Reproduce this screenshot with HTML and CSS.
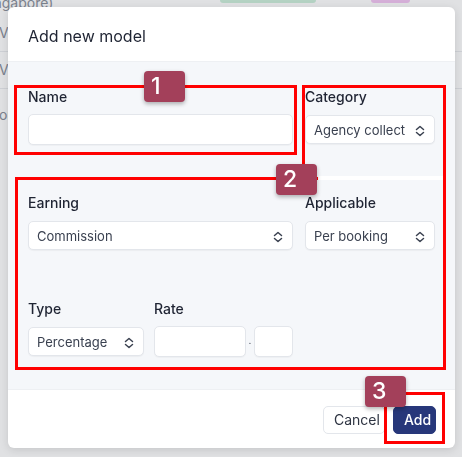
FILE: index.html
```html
<!DOCTYPE html>
<html lang="en">
<head>
    <meta charset="UTF-8">
    <meta name="viewport" content="width=device-width, initial-scale=1.0">
    <title>Add new model</title>
    <link rel="stylesheet" href="styles.css">
</head>
<body>
    <!-- page behind the dialog -->
    <div class="page">
        <div class="tags">
            <span class="tag tag-green"></span>
            <span class="tag tag-pink"></span>
        </div>
        <div class="row row-first">
            <span class="cell cell-city">(Singapore)</span>
            <span class="cell cell-vip">VIP</span>
        </div>
        <div class="row"><span class="cell">VIP</span></div>
        <div class="row row-last"><span class="cell cell-tour">Tour</span></div>
    </div>

    <div class="overlay">
        <div class="modal">
            <div class="modal-header">Add new model</div>

            <div class="modal-body">
                <div class="form-grid">
                    <div class="field">
                        <label>Name</label>
                        <div class="control">
                            <input class="input" type="text">
                        </div>
                    </div>
                    <div class="field">
                        <label>Category</label>
                        <div class="control">
                            <div class="select">Agency collect
                                <svg class="chevron" width="10" height="12" viewBox="0 0 10 12"><path d="M1.5 4.5 5 1.5 8.5 4.5M1.5 7.5 5 10.5 8.5 7.5"/></svg>
                            </div>
                        </div>
                    </div>

                    <div class="field">
                        <label>Earning</label>
                        <div class="control">
                            <div class="select">Commission
                                <svg class="chevron" width="10" height="12" viewBox="0 0 10 12"><path d="M1.5 4.5 5 1.5 8.5 4.5M1.5 7.5 5 10.5 8.5 7.5"/></svg>
                            </div>
                        </div>
                    </div>
                    <div class="field">
                        <label>Applicable</label>
                        <div class="control">
                            <div class="select">Per booking
                                <svg class="chevron" width="10" height="12" viewBox="0 0 10 12"><path d="M1.5 4.5 5 1.5 8.5 4.5M1.5 7.5 5 10.5 8.5 7.5"/></svg>
                            </div>
                        </div>
                    </div>

                    <div class="rate-row">
                        <div class="field field-type">
                            <label>Type</label>
                            <div class="control">
                                <div class="select">Percentage
                                    <svg class="chevron" width="10" height="12" viewBox="0 0 10 12"><path d="M1.5 4.5 5 1.5 8.5 4.5M1.5 7.5 5 10.5 8.5 7.5"/></svg>
                                </div>
                            </div>
                        </div>
                        <div class="field">
                            <label>Rate</label>
                            <div class="control">
                                <input class="input input-whole" type="text">
                                <span class="dot">.</span>
                                <input class="input input-decimal" type="text">
                            </div>
                        </div>
                    </div>
                </div>
            </div>

            <div class="modal-footer">
                <button class="btn btn-cancel">Cancel</button>
                <button class="btn btn-add">Add</button>
            </div>
        </div>
    </div>

    <!-- annotation marks -->
    <div class="marks">
        <div class="box box-name"></div>
        <div class="box box-category"></div>
        <div class="box box-earning"></div>
        <div class="box-gap"></div>
        <div class="box box-add"></div>
        <div class="badge badge-1">1</div>
        <div class="badge badge-2">2</div>
        <div class="badge badge-3">3</div>
    </div>
</body>
</html>
```

FILE: styles.css
```css
body {
    margin: 0;
    font-family: Inter, "Noto Sans", sans-serif;
    background: #fff;
    color: #1f2433;
    overflow: hidden;
}

/* Page behind the dialog */
.page {
    color: #8b919c;
    font-size: 14px;
}

.tags {
    display: flex;
    height: 3px;
    padding-left: 220px;
    gap: 55px;
}

.tag {
    display: block;
    height: 3px;
    border-radius: 0 0 5px 5px;
}

.tag-green {
    width: 96px;
    background: #cdeedb;
}

.tag-pink {
    width: 39px;
    background: #f3c6f3;
}

.row {
    box-sizing: border-box;
    height: 37px;
    border-bottom: 1px solid #eaecef;
    display: flex;
    flex-direction: column;
    justify-content: center;
}

.row-first {
    height: 52px;
    margin-top: -3px;
    justify-content: flex-start;
}

.row-last {
    height: 50px;
    justify-content: flex-start;
    padding-top: 18px;
    border-bottom: none;
}

.cell {
    display: block;
    line-height: 16px;
    margin-left: -1px;
}

.cell-city {
    margin-top: -5px;
    margin-left: -24px;
}

.cell-vip {
    margin-top: 14px;
}

.cell-tour {
    margin-left: -9px;
}

/* Dialog */
.overlay {
    position: fixed;
    inset: 0;
    background: rgba(17, 24, 39, 0.13);
    padding: 7px 7px 9px 8px;
}

.modal {
    width: 447px;
    height: 441px;
    background: #fff;
    border-radius: 6px;
    box-shadow: 0 2px 8px rgba(0, 0, 0, 0.12);
    display: flex;
    flex-direction: column;
    overflow: hidden;
}

.modal-header {
    height: 55px;
    box-sizing: border-box;
    padding: 18px 20px 0;
    font-size: 16px;
    line-height: 22px;
    border-bottom: 1px solid #eef0f3;
}

.modal-body {
    height: 327px;
    box-sizing: border-box;
    background: #f5f7fa;
    padding: 25px 20px 0;
}

.form-grid {
    display: grid;
    grid-template-columns: 265px 130px;
    column-gap: 12px;
    row-gap: 48px;
}

.field {
    display: flex;
    flex-direction: column;
}

.field label {
    font-size: 14px;
    font-weight: 500;
    line-height: 20px;
    margin-bottom: 7px;
    color: #1f2433;
}

.control {
    height: 31px;
    display: flex;
    align-items: center;
}

.input {
    box-sizing: border-box;
    height: 31px;
    width: 100%;
    margin: 0;
    background: #fff;
    border: 1px solid #e3e6eb;
    border-radius: 5px;
    box-shadow: 0 1px 1px rgba(0, 0, 0, 0.03);
}

.select {
    box-sizing: border-box;
    height: 29px;
    width: 100%;
    display: flex;
    align-items: center;
    justify-content: space-between;
    padding: 1px 9px 0 8px;
    background: #fff;
    border: 1px solid #e3e6eb;
    border-radius: 5px;
    box-shadow: 0 1px 1px rgba(0, 0, 0, 0.04);
    font-size: 13px;
    color: #3a4150;
}

.chevron {
    fill: none;
    stroke: #3a4150;
    stroke-width: 1.5;
    stroke-linecap: round;
    stroke-linejoin: round;
    margin-top: 2px;
}

.rate-row {
    display: flex;
    gap: 10px;
}

.field-type {
    width: 117px;
}

.input-whole {
    width: 92px;
}

.dot {
    width: 8px;
    text-align: center;
    font-size: 10px;
    color: #3a4150;
    margin-top: -4px;
}

.input-decimal {
    width: 39px;
}

.modal-footer {
    height: 59px;
    box-sizing: border-box;
    border-top: 1px solid #eef0f3;
    display: flex;
    justify-content: flex-end;
    align-items: center;
    gap: 8px;
    padding: 1px 19px 0 0;
}

.btn {
    height: 28px;
    border-radius: 5px;
    font-family: inherit;
    font-size: 14px;
    padding: 0 10px;
    margin: 0;
}

.btn-cancel {
    width: 62px;
    background: #fff;
    border: 1px solid #e3e6eb;
    color: #2e3442;
}

.btn-add {
    width: 43px;
    background: #27377a;
    border: 1px solid #27377a;
    color: #fff;
    font-weight: 500;
}

/* Annotation marks drawn over the screenshot */
.marks {
    position: fixed;
    inset: 0;
    pointer-events: none;
}

.box {
    position: absolute;
    box-sizing: border-box;
    border: 3px solid #ff0000;
}

.box-name {
    left: 14px;
    top: 85px;
    width: 283px;
    height: 70px;
}

.box-category {
    left: 302px;
    top: 85px;
    width: 144px;
    height: 95px;
}

.box-earning {
    left: 15px;
    top: 177px;
    width: 431px;
    height: 193px;
}

.box-gap {
    position: absolute;
    left: 318px;
    top: 176px;
    width: 125px;
    height: 4px;
    background: #fff;
}

.box-add {
    left: 384px;
    top: 392px;
    width: 61px;
    height: 52px;
}

.badge {
    position: absolute;
    box-sizing: border-box;
    width: 41px;
    height: 31px;
    padding-left: 7px;
    background: #a3405a;
    border-radius: 4px;
    box-shadow: 0 2px 4px rgba(0, 0, 0, 0.3);
    color: #fff;
    font-size: 23px;
    font-weight: 500;
    line-height: 31px;
}

.badge-1 {
    left: 144px;
    top: 71px;
}

.badge-2 {
    left: 276px;
    top: 164px;
}

.badge-3 {
    left: 365px;
    top: 376px;
}
```
